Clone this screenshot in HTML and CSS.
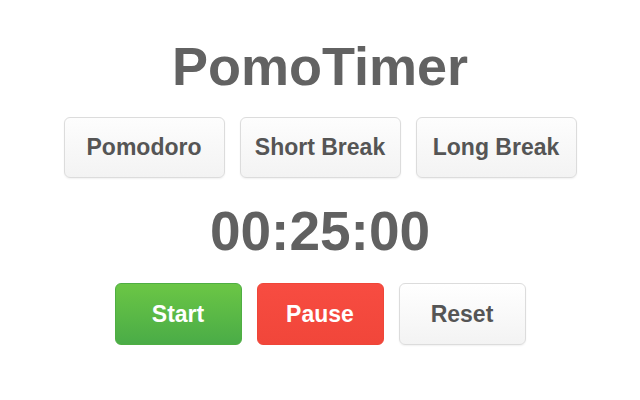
FILE: index.html
```html
<!DOCTYPE html>
<html>
<head>
<meta charset="utf-8">
<link rel="stylesheet" href="styles.css">
</head>
<body>
<main class="app">
  <h1 class="title">PomoTimer</h1>
  <div class="modes">
    <button class="btn mode">Pomodoro</button>
    <button class="btn mode">Short Break</button>
    <button class="btn mode">Long Break</button>
  </div>
  <div class="timer">00:25:00</div>
  <div class="controls">
    <button class="btn ctrl start">Start</button>
    <button class="btn ctrl pause">Pause</button>
    <button class="btn ctrl reset">Reset</button>
  </div>
</main>
</body>
</html>
```

FILE: styles.css
```css
html, body {
  margin: 0;
  padding: 0;
  background: #ffffff;
}
body {
  width: 640px;
  height: 400px;
  font-family: "Liberation Sans", Arial, sans-serif;
}
.app {
  display: flex;
  flex-direction: column;
  align-items: center;
  padding-top: 35px;
}
.title {
  margin: 0;
  font-size: 54px;
  line-height: 62px;
  font-weight: bold;
  color: #626262;
}
.modes {
  display: flex;
  gap: 15px;
  margin-top: 20px;
}
.btn {
  font-family: "Liberation Sans", Arial, sans-serif;
  font-weight: bold;
  font-size: 23px;
  border-radius: 6px;
  padding: 0;
  cursor: pointer;
}
.mode {
  width: 161px;
  height: 61px;
  color: #555555;
  border: 1px solid #dcdcdc;
  background: linear-gradient(#fdfdfd, #f3f3f3);
  box-shadow: 0 1px 2px rgba(0,0,0,0.06);
}
.timer {
  margin-top: 22px;
  font-size: 55px;
  line-height: 63px;
  font-weight: bold;
  color: #616161;
}
.controls {
  display: flex;
  gap: 15px;
  margin-top: 20px;
}
.ctrl {
  width: 127px;
  height: 62px;
}
.start {
  color: #ffffff;
  border: 1px solid #4fae43;
  background: linear-gradient(#6bc645, #4aac47);
}
.pause {
  color: #ffffff;
  border: 1px solid #ef4638;
  background: linear-gradient(#f74c41, #f1463a);
}
.reset {
  color: #555555;
  border: 1px solid #dcdcdc;
  background: linear-gradient(#ffffff, #f3f3f3);
  box-shadow: 0 1px 2px rgba(0,0,0,0.06);
}
```
